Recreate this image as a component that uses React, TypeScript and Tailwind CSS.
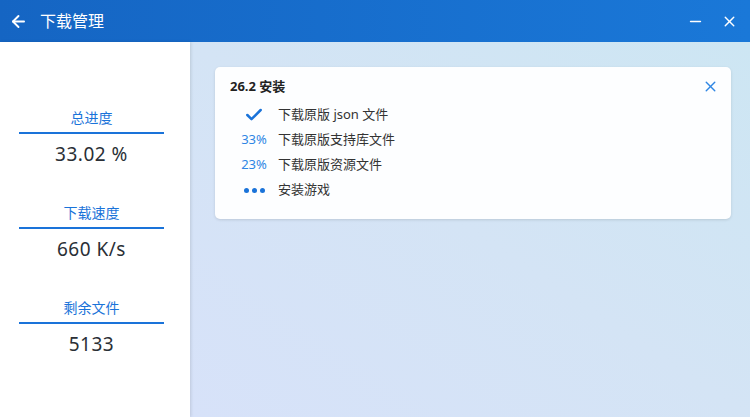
import { ArrowLeft, Check, Minus, X } from "lucide-react";

const font = { fontFamily: '"Noto Sans", "Noto Sans CJK SC", sans-serif' };

const stats = [
  { label: "总进度", value: "33.02 %" },
  { label: "下载速度", value: "660 K/s" },
  { label: "剩余文件", value: "5133" },
];

const tasks = [
  { status: "done", text: "下载原版 json 文件" },
  { status: "33%", text: "下载原版支持库文件" },
  { status: "23%", text: "下载原版资源文件" },
  { status: "wait", text: "安装游戏" },
];

function Status({ status }: { status: string }) {
  if (status === "done") {
    return <Check size={20} strokeWidth={3} className="text-[#1a73d9]" />;
  }
  if (status === "wait") {
    return (
      <div className="flex gap-[3px]">
        <span className="h-[5px] w-[5px] rounded-full bg-[#1a73d9]" />
        <span className="h-[5px] w-[5px] rounded-full bg-[#1a73d9]" />
        <span className="h-[5px] w-[5px] rounded-full bg-[#1a73d9]" />
      </div>
    );
  }
  return <span className="text-[13px] text-[#2f86e4]">{status}</span>;
}

export default function App() {
  return (
    <div className="flex h-[417px] w-[750px] flex-col overflow-hidden" style={font}>
      <header className="flex h-[42px] shrink-0 items-center bg-gradient-to-r from-[#1565c3] to-[#1a78d8] pl-[9px] pr-[12px] text-white">
        <ArrowLeft size={19} strokeWidth={2.4} />
        <span className="ml-[12px] text-[16px]">下载管理</span>
        <div className="ml-auto flex items-center gap-[17px]">
          <Minus size={17} strokeWidth={2} />
          <X size={17} strokeWidth={2} />
        </div>
      </header>

      <div className="flex flex-1">
        <aside className="z-10 flex w-[190px] shrink-0 flex-col bg-white pl-[19px] pt-[66px] shadow-[1px_0_3px_rgba(0,0,0,0.12)]">
          {stats.map((s) => (
            <div key={s.label} className="mb-[36px] flex w-[145px] flex-col items-center">
              <span className="text-[14px] leading-[20px] text-[#1a73d9]">{s.label}</span>
              <div className="mt-[4px] h-[2px] w-full bg-[#1a73d9]" />
              <span className="mt-[7px] text-[19px] leading-[26px] tracking-[0.5px] text-[#2a2f36]">
                {s.value}
              </span>
            </div>
          ))}
        </aside>

        <main className="flex-1 bg-gradient-to-tr from-[#d7e2f9] via-[#d4e4f5] to-[#cde6f3] pl-[25px] pr-[19px] pt-[25px]">
          <div className="rounded-[5px] bg-[#fdfeff] pb-[16px] pl-[15px] pr-[12px] pt-[10px] shadow-[0_1px_3px_rgba(0,0,0,0.12)]">
            <div className="flex items-center justify-between">
              <span className="text-[13px] font-bold text-[#222]">26.2 安装</span>
              <X size={17} strokeWidth={2} className="text-[#2f86e4]" />
            </div>
            <div className="mt-[6px] flex flex-col">
              {tasks.map((t) => (
                <div key={t.text} className="flex h-[25px] items-center">
                  <div className="flex w-[48px] justify-center">
                    <Status status={t.status} />
                  </div>
                  <span className="text-[13px] text-[#333]">{t.text}</span>
                </div>
              ))}
            </div>
          </div>
        </main>
      </div>
    </div>
  );
}
